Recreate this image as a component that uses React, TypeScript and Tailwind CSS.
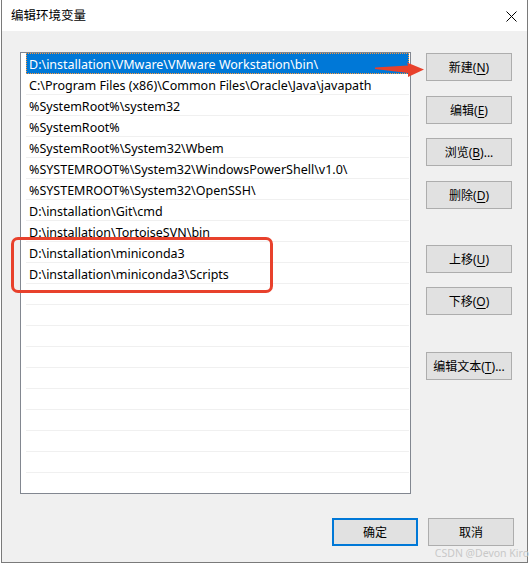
import React from "react";

const items = [
  "D:\\installation\\VMware\\VMware Workstation\\bin\\",
  "C:\\Program Files (x86)\\Common Files\\Oracle\\Java\\javapath",
  "%SystemRoot%\\system32",
  "%SystemRoot%",
  "%SystemRoot%\\System32\\Wbem",
  "%SYSTEMROOT%\\System32\\WindowsPowerShell\\v1.0\\",
  "%SYSTEMROOT%\\System32\\OpenSSH\\",
  "D:\\installation\\Git\\cmd",
  "D:\\installation\\TortoiseSVN\\bin",
  "D:\\installation\\miniconda3",
  "D:\\installation\\miniconda3\\Scripts",
];

function Btn({
  label,
  k,
  tail = "",
  mt,
  primary = false,
}: {
  label: string;
  k?: string;
  tail?: string;
  mt: string;
  primary?: boolean;
}) {
  return (
    <div
      className={`${mt} w-[86px] h-[28px] flex items-center justify-center pt-[2px] bg-[#e1e1e1] text-[12px] text-black leading-none ${
        primary ? "border-2 border-[#0078d7]" : "border border-[#adadad]"
      }`}
    >
      <span>
        {label}
        {k !== undefined && (
          <>
            (<span className="underline underline-offset-2">{k}</span>)
          </>
        )}
        {tail}
      </span>
    </div>
  );
}

export default function App() {
  const rows = Array.from({ length: 22 }, (_, i) => items[i] ?? "");
  return (
    <div
      className="relative w-[531px] h-[565px] bg-white overflow-hidden"
      style={{ fontFamily: '"Noto Sans", "Noto Sans CJK SC", sans-serif' }}
    >
      <div className="ml-[1px] w-[527px] h-[563px] flex flex-col border-l border-r border-b border-[#7a7a7a] bg-[#f0f0f0]">
        {/* title bar */}
        <div className="h-[31px] bg-white flex items-center justify-between pl-[9px] pr-[9px] pt-[2px] shrink-0">
          <span className="text-[12.5px] text-black">编辑环境变量</span>
          <svg width="11" height="11" viewBox="0 0 11 11" className="mr-[1px]">
            <path d="M0.5 0.5 L10.5 10.5 M10.5 0.5 L0.5 10.5" stroke="#000" strokeWidth="1" />
          </svg>
        </div>
        {/* client */}
        <div className="flex-1 flex flex-col pl-[18px] pr-[13px] pt-[21px]">
          <div className="flex">
            {/* list */}
            <div className="w-[391px] h-[442px] border border-[#828790] bg-white overflow-hidden pl-[5px] pr-[1px]">
              {rows.map((t, i) => (
                <div
                  key={i}
                  className={`h-[21px] flex items-center pl-[3px] pt-[4px] text-[12.5px] whitespace-nowrap ${
                    i === 0
                      ? "bg-[#0078d7] text-white outline-1 outline-dotted outline-[#ff9a3c] -outline-offset-1"
                      : "text-black border-b border-[#f0f0f0]"
                  }`}
                >
                  {t}
                </div>
              ))}
            </div>
            {/* buttons */}
            <div className="ml-[15px] flex flex-col">
              <Btn label="新建" k="N" mt="mt-[1px]" />
              <Btn label="编辑" k="E" mt="mt-[15px]" />
              <Btn label="浏览" k="B" tail="..." mt="mt-[14px]" />
              <Btn label="删除" k="D" mt="mt-[15px]" />
              <Btn label="上移" k="U" mt="mt-[36px]" />
              <Btn label="下移" k="O" mt="mt-[14px]" />
              <Btn label="编辑文本" k="T" tail="..." mt="mt-[37px]" />
            </div>
          </div>
          <div className="flex justify-end gap-[10px] mt-[24px]">
            <Btn label="确定" mt="mt-0" primary />
            <Btn label="取消" mt="mt-0" />
          </div>
        </div>
      </div>

      {/* red annotations */}
      <div className="absolute left-[11px] top-[237px] w-[262px] h-[56px] border-[3px] border-[#e8412c] rounded-[7px]" />
      <svg className="absolute left-0 top-0" width="531" height="565">
        <polygon points="375,67.5 408,65.5 407,62.5 424,69.5 408,77 408,73 375,69" fill="#e8412c" />
      </svg>
      <div className="absolute right-[2px] top-[546px] text-[10.5px] text-[#c8c8c8]">CSDN @Devon Kiro</div>
    </div>
  );
}
